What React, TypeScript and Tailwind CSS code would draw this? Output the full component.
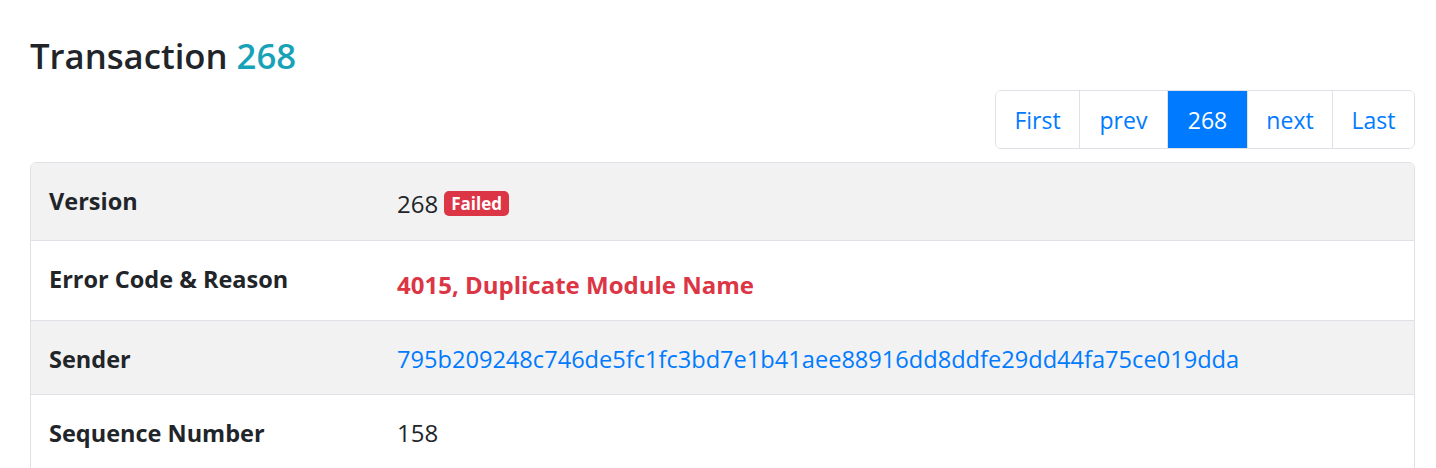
import React from 'react';

const pages = [
  { label: "First", w: "w-[83px]", active: false },
  { label: "prev", w: "w-[88px]", active: false },
  { label: "268", w: "w-[80px]", active: true },
  { label: "next", w: "w-[85px]", active: false },
  { label: "Last", w: "w-[82px]", active: false },
];

const sender = "795b209248c746de5fc1fc3bd7e1b41aee88916dd8ddfe29dd44fa75ce019dda";

const App: React.FC = () => {
  return (
    <div className="min-h-[468px] bg-white pl-[30px] pr-[21px] pt-[32px] text-[#212529] font-['Open_Sans',sans-serif]">
      <h1 className="text-[34.7px] leading-[48px] font-semibold">
        Transaction <span className="text-[#17a2b8]">268</span>
      </h1>

      <div className="flex justify-end mt-[10px]">
        <ul className="flex border border-[#dee2e6] rounded-md overflow-hidden">
          {pages.map((p, i) => (
            <li
              key={p.label}
              className={`${p.w} h-[57px] pt-[2px] flex items-center justify-center text-[23px] ${
                i > 0 ? "border-l border-[#dee2e6]" : ""
              } ${p.active ? "bg-[#007bff] text-white border-[#007bff]" : "bg-white text-[#007bff]"}`}
            >
              {p.label}
            </li>
          ))}
        </ul>
      </div>

      <div className="mt-[13px] border border-[#dee2e6] rounded-md overflow-hidden text-[24px] leading-[36px]">
        <div className="flex h-[78px] bg-[#f2f2f2] border-b border-[#dee2e6]">
          <div className="w-[347px] shrink-0 px-[18px] pt-[20px] text-[23.5px] font-bold">Version</div>
          <div className="px-[19px] pt-[23px] flex items-start">
            <span>268</span>
            <span className="ml-[6px] mt-[5px] h-[25px] px-[7px] rounded-[5px] bg-[#dc3545] text-white text-[17px] leading-[25px] font-bold">
              Failed
            </span>
          </div>
        </div>
        <div className="flex h-[80px] bg-white border-b border-[#dee2e6]">
          <div className="w-[347px] shrink-0 px-[18px] pt-[20px] text-[23.5px] font-bold">Error Code &amp; Reason</div>
          <div className="px-[19px] pt-[26px] font-bold text-[#dc3545]">4015, Duplicate Module Name</div>
        </div>
        <div className="flex h-[74px] bg-[#f2f2f2] border-b border-[#dee2e6]">
          <div className="w-[347px] shrink-0 px-[18px] pt-[20px] text-[23.5px] font-bold">Sender</div>
          <div className="px-[19px] pt-[20px] text-[23.6px] text-[#007bff]">{sender}</div>
        </div>
        <div className="flex h-[80px] bg-white">
          <div className="w-[347px] shrink-0 px-[18px] pt-[20px] text-[23.5px] font-bold">Sequence Number</div>
          <div className="px-[19px] pt-[20px]">158</div>
        </div>
      </div>
    </div>
  );
};

export default App;
